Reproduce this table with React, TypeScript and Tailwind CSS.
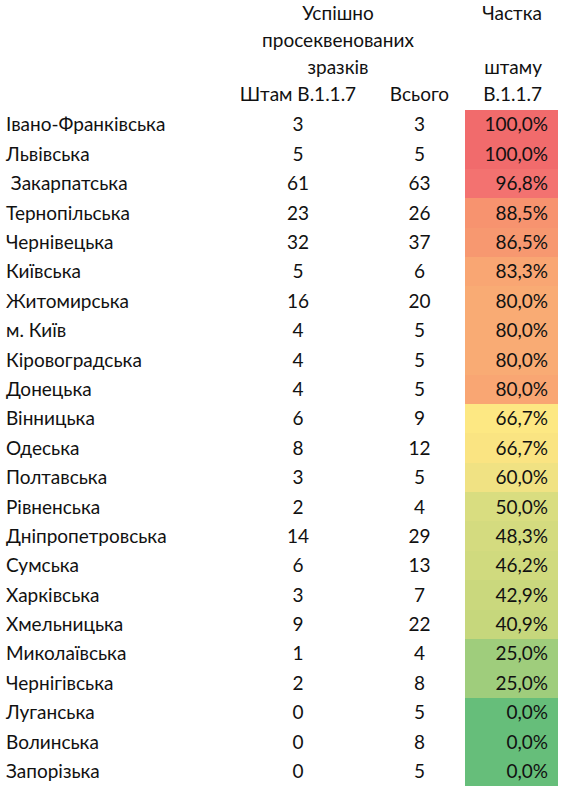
import React from 'react';

type Row = { name: string; strain: number; total: number; share: string; color: string };

const ROWS: Row[] = [
  { name: 'Івано-Франківська', strain: 3, total: 3, share: '100,0%', color: 'bg-[#f16b6c]' },
  { name: 'Львівська', strain: 5, total: 5, share: '100,0%', color: 'bg-[#f16b6c]' },
  { name: ' Закарпатська', strain: 61, total: 63, share: '96,8%', color: 'bg-[#f37270]' },
  { name: 'Тернопільська', strain: 23, total: 26, share: '88,5%', color: 'bg-[#f7936f]' },
  { name: 'Чернівецька', strain: 32, total: 37, share: '86,5%', color: 'bg-[#f79870]' },
  { name: 'Київська', strain: 5, total: 6, share: '83,3%', color: 'bg-[#f9a673]' },
  { name: 'Житомирська', strain: 16, total: 20, share: '80,0%', color: 'bg-[#f9ab74]' },
  { name: 'м. Київ', strain: 4, total: 5, share: '80,0%', color: 'bg-[#f9ab74]' },
  { name: 'Кіровоградська', strain: 4, total: 5, share: '80,0%', color: 'bg-[#f9ab74]' },
  { name: 'Донецька', strain: 4, total: 5, share: '80,0%', color: 'bg-[#f9a673]' },
  { name: 'Вінницька', strain: 6, total: 9, share: '66,7%', color: 'bg-[#fde883]' },
  { name: 'Одеська', strain: 8, total: 12, share: '66,7%', color: 'bg-[#fae482]' },
  { name: 'Полтавська', strain: 3, total: 5, share: '60,0%', color: 'bg-[#f0e283]' },
  { name: 'Рівненська', strain: 2, total: 4, share: '50,0%', color: 'bg-[#d9dd80]' },
  { name: 'Дніпропетровська', strain: 14, total: 29, share: '48,3%', color: 'bg-[#d4db7f]' },
  { name: 'Сумська', strain: 6, total: 13, share: '46,2%', color: 'bg-[#d0da7e]' },
  { name: 'Харківська', strain: 3, total: 7, share: '42,9%', color: 'bg-[#cad87d]' },
  { name: 'Хмельницька', strain: 9, total: 22, share: '40,9%', color: 'bg-[#c6d77c]' },
  { name: 'Миколаївська', strain: 1, total: 4, share: '25,0%', color: 'bg-[#9fcd7c]' },
  { name: 'Чернігівська', strain: 2, total: 8, share: '25,0%', color: 'bg-[#9fcd7c]' },
  { name: 'Луганська', strain: 0, total: 5, share: '0,0%', color: 'bg-[#66be7a]' },
  { name: 'Волинська', strain: 0, total: 8, share: '0,0%', color: 'bg-[#66be7a]' },
  { name: 'Запорізька', strain: 0, total: 5, share: '0,0%', color: 'bg-[#66be7a]' },
];

const HEADER: [string, string][] = [
  ['Успішно', 'Частка'],
  ['просеквенованих', ''],
  ['зразків', 'штаму'],
];

export default function App() {
  return (
    <div className="w-[571px] h-[793px] bg-white text-[#111] text-[19px] font-['Lato',sans-serif] overflow-hidden">
      {/* header block */}
      {HEADER.map(([mid, right], i) => (
        <div key={i} className="flex h-[27px] items-center">
          <div className="w-[238px]" />
          <div className="w-[200px] text-center">{mid}</div>
          <div className="w-[27px]" />
          <div className="w-[93px] text-right pr-[16px]">{right}</div>
        </div>
      ))}
      <div className="flex h-[27px] items-center">
        <div className="w-[238px]" />
        <div className="w-[120px] text-center">Штам В.1.1.7</div>
        <div className="w-[107px] pl-[18px] pr-[2px] text-center">Всього</div>
        <div className="w-[93px] text-right pr-[16px]">В.1.1.7</div>
      </div>

      <div className="pt-[2px]">
        {ROWS.map((r) => (
          <div key={r.name} className="flex h-[29.4px] items-center">
            <div className="w-[238px] pl-[6px] whitespace-pre">{r.name}</div>
            <div className="w-[120px] text-center">{r.strain}</div>
            <div className="w-[107px] pl-[18px] pr-[2px] text-center">{r.total}</div>
            <div className={`w-[93px] h-full flex items-center justify-end pr-[10px] ${r.color}`}>{r.share}</div>
          </div>
        ))}
      </div>
    </div>
  );
}
